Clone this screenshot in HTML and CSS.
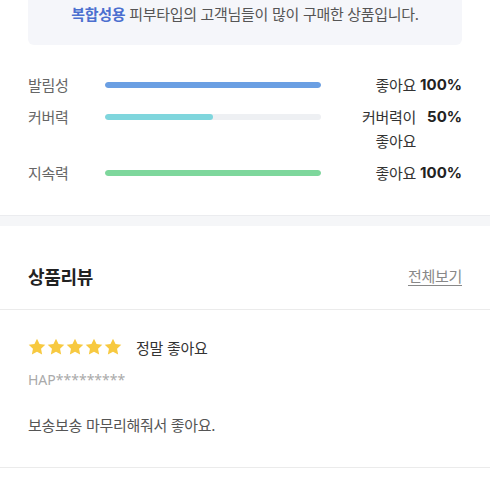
FILE: index.html
```html
<!DOCTYPE html>
<html lang="ko">
<head>
<meta charset="utf-8">
<link rel="stylesheet" href="styles.css">
</head>
<body>
<div class="page">
  <section class="summary-section">
    <p class="summary"><strong class="skin">복합성용</strong> 피부타입의 고객님들이 많이 구매한 상품입니다.</p>
    <div class="ratings">
      <div class="rating-row">
        <span class="rating-label">발림성</span>
        <div class="track"><div class="fill fill-blue" style="width:100%"></div></div>
        <span class="rating-text">좋아요</span>
        <span class="rating-pct">100%</span>
      </div>
      <div class="rating-row">
        <span class="rating-label">커버력</span>
        <div class="track"><div class="fill fill-teal" style="width:50%"></div></div>
        <span class="rating-text">커버력이 좋아요</span>
        <span class="rating-pct">50%</span>
      </div>
      <div class="rating-row">
        <span class="rating-label">지속력</span>
        <div class="track"><div class="fill fill-green" style="width:100%"></div></div>
        <span class="rating-text">좋아요</span>
        <span class="rating-pct">100%</span>
      </div>
    </div>
  </section>
  <div class="band"></div>
  <section class="reviews">
    <header class="reviews-head">
      <h2 class="reviews-title">상품리뷰</h2>
      <a class="view-all" href="#">전체보기</a>
    </header>
    <article class="review">
      <div class="review-top">
        <div class="stars">
          <svg class="star" viewBox="2 2 20 20"><path d="M12 2.8l2.8 5.9 6.4.8-4.7 4.4 1.2 6.4L12 17.2l-5.7 3.1 1.2-6.4-4.7-4.4 6.4-.8z"/></svg>
          <svg class="star" viewBox="2 2 20 20"><path d="M12 2.8l2.8 5.9 6.4.8-4.7 4.4 1.2 6.4L12 17.2l-5.7 3.1 1.2-6.4-4.7-4.4 6.4-.8z"/></svg>
          <svg class="star" viewBox="2 2 20 20"><path d="M12 2.8l2.8 5.9 6.4.8-4.7 4.4 1.2 6.4L12 17.2l-5.7 3.1 1.2-6.4-4.7-4.4 6.4-.8z"/></svg>
          <svg class="star" viewBox="2 2 20 20"><path d="M12 2.8l2.8 5.9 6.4.8-4.7 4.4 1.2 6.4L12 17.2l-5.7 3.1 1.2-6.4-4.7-4.4 6.4-.8z"/></svg>
          <svg class="star" viewBox="2 2 20 20"><path d="M12 2.8l2.8 5.9 6.4.8-4.7 4.4 1.2 6.4L12 17.2l-5.7 3.1 1.2-6.4-4.7-4.4 6.4-.8z"/></svg>
        </div>
        <span class="review-rating">정말 좋아요</span>
      </div>
      <p class="review-user">HAP*********</p>
      <p class="review-body">보송보송 마무리해줘서 좋아요.</p>
    </article>
  </section>
</div>
</body>
</html>
```

FILE: styles.css
```css
* { box-sizing: border-box; }
html, body { margin: 0; padding: 0; background: #fff; }
body {
  font-family: "Noto Sans CJK KR", "Noto Sans", sans-serif;
  color: #333;
  letter-spacing: -0.3px;
}
p, h2 { margin: 0; }

.summary-section { padding: 0 28px 30px; }
.summary {
  background: #f5f6fa;
  border-radius: 0 0 6px 6px;
  text-align: center;
  font-size: 15px;
  line-height: 20px;
  padding: 4px 0 21px;
  color: #555;
}
.skin { color: #4b6fcf; font-weight: 700; }

.ratings {
  margin-top: 28px;
  display: flex;
  flex-direction: column;
  gap: 8px;
}
.rating-row {
  display: flex;
  align-items: flex-start;
  font-size: 15px;
  line-height: 24px;
}
.rating-label { width: 77px; color: #666; }
.track {
  width: 216px;
  height: 6px;
  margin-top: 9px;
  border-radius: 3px;
  background: #eef0f3;
  overflow: hidden;
}
.fill { height: 100%; border-radius: 3px; }
.fill-blue { background: #6a9fe3; }
.fill-teal { background: #7fd6dd; }
.fill-green { background: #7ed79c; }
.rating-text {
  margin-left: auto;
  width: 60px;
  text-align: right;
  color: #333;
}
.rating-pct {
  width: 42px;
  margin-left: 4px;
  text-align: right;
  font-family: "Inter", "Noto Sans", sans-serif;
  font-weight: 700;
  font-size: 15px;
  color: #222;
  letter-spacing: 0;
}

.band {
  height: 11px;
  background: #f5f6f8;
  border-top: 1px solid #ebecef;
}

.reviews-head {
  display: flex;
  justify-content: space-between;
  align-items: center;
  padding: 39px 28px 22px;
  border-bottom: 1px solid #ebebeb;
}
.reviews-title {
  font-size: 18px;
  line-height: 22px;
  font-weight: 700;
  color: #222;
}
.view-all {
  font-size: 15px;
  line-height: 22px;
  color: #888;
  text-decoration: underline;
  text-underline-offset: 3px;
}

.review {
  padding: 26px 28px 31px;
  border-bottom: 1px solid #ebebeb;
}
.review-top {
  display: flex;
  align-items: center;
  height: 22px;
}
.stars { display: flex; gap: 1px; }
.star { width: 18px; height: 18px; fill: #f7c940; }
.review-rating {
  margin-left: 14px;
  font-size: 15px;
  color: #333;
}
.review-user {
  margin-top: 12px;
  font-family: "Noto Sans", sans-serif;
  font-size: 14px;
  line-height: 20px;
  color: #aaa;
  letter-spacing: 0;
}
.review-body {
  margin-top: 24px;
  font-size: 15px;
  line-height: 22px;
  color: #555;
}
```
